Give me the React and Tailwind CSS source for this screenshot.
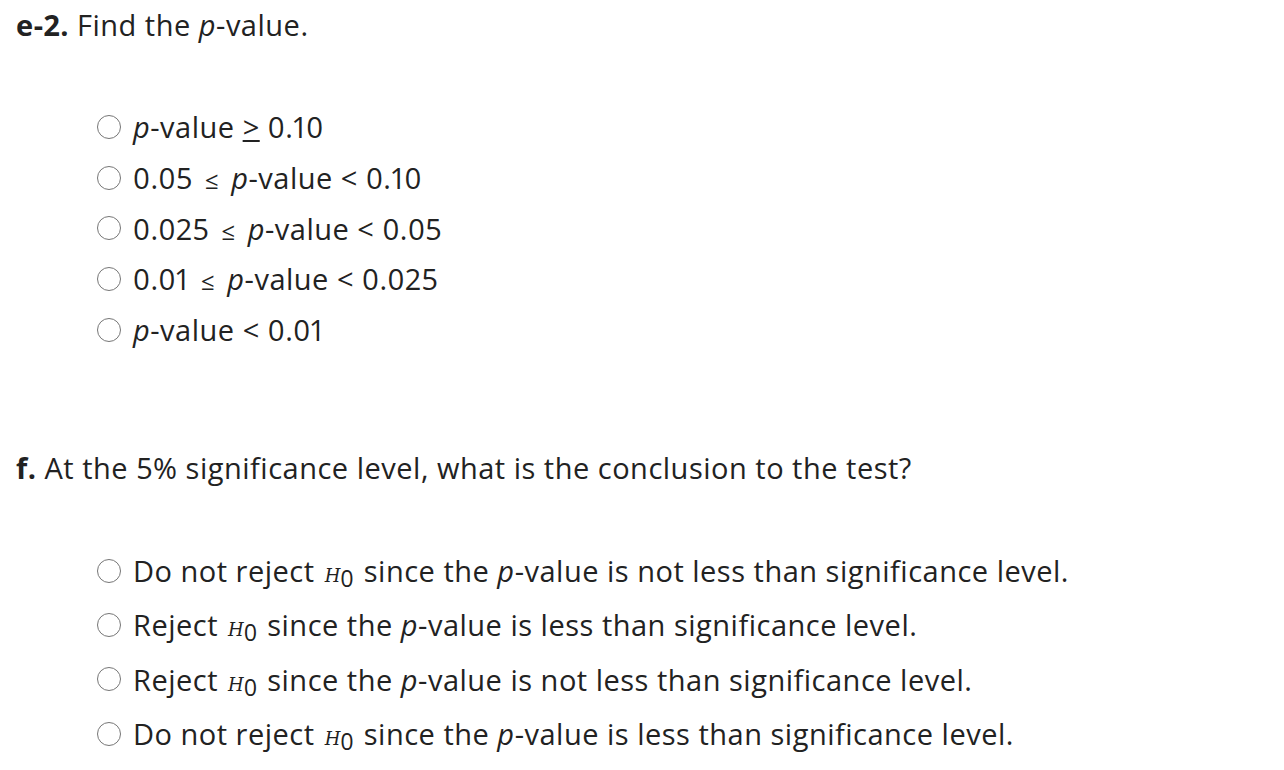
const pv = <><i>p</i>-value</>;
const le = <span className="text-[24px] mx-[4px]">≤</span>;
const H0 = (
  <span className="font-['DejaVu_Serif',serif] italic text-[18px] mx-[2px] tracking-normal">
    H<span className="relative top-[5px] not-italic text-[23px] font-['Open_Sans',sans-serif]">0</span>
  </span>
);

const group1 = [
  <>{pv} <span className="underline underline-offset-2">&gt;</span> 0.10</>,
  <>0.05 {le} {pv} &lt; 0.10</>,
  <>0.025 {le} {pv} &lt; 0.05</>,
  <>0.01 {le} {pv} &lt; 0.025</>,
  <>{pv} &lt; 0.01</>,
];

const group2 = [
  <>Do not reject {H0} since the {pv} is not less than significance level.</>,
  <>Reject {H0} since the {pv} is less than significance level.</>,
  <>Reject {H0} since the {pv} is not less than significance level.</>,
  <>Do not reject {H0} since the {pv} is less than significance level.</>,
];

function Option({ children }) {
  return (
    <label className="flex items-center gap-[12px] h-[40px]">
      <span className="w-[24px] h-[24px] rounded-full border-[1.5px] border-[#767676] bg-white shrink-0" />
      <span>{children}</span>
    </label>
  );
}

export default function App() {
  return (
    <div className="w-[1284px] h-[770px] bg-white text-[#222] font-['Open_Sans',sans-serif] text-[29px] tracking-[0.5px] proportional-nums overflow-hidden">
      <div className="pl-[16px] pt-[5px]">
        <h2 className="leading-[40px]">
          <b>e-2.</b> Find the {pv}.
        </h2>
        <div className="pl-[81px] mt-[62px] flex flex-col gap-[10.7px]">
          {group1.map((o, i) => (
            <Option key={i}>{o}</Option>
          ))}
        </div>
        <h2 className="leading-[40px] mt-[98px]">
          <b>f.</b> At the 5% significance level, what is the conclusion to the test?
        </h2>
        <div className="pl-[81px] mt-[63px] flex flex-col gap-[14.3px]">
          {group2.map((o, i) => (
            <Option key={i}>{o}</Option>
          ))}
        </div>
      </div>
    </div>
  );
}
